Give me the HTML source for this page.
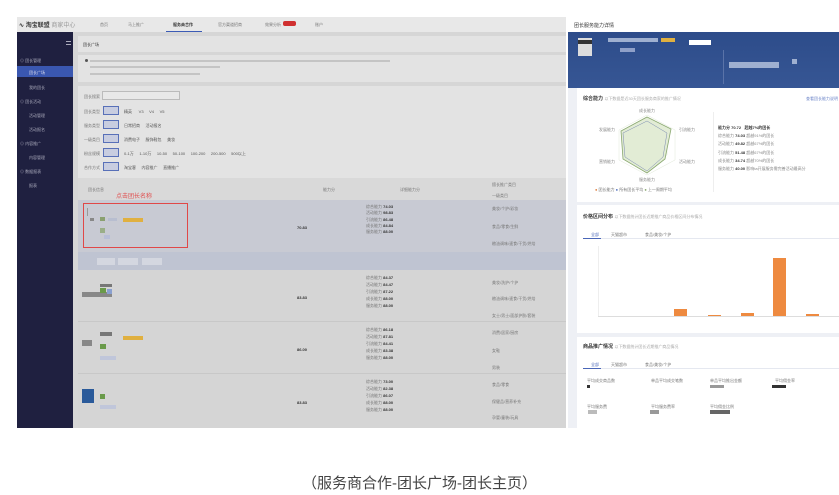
<!DOCTYPE html>
<html><head><meta charset="utf-8"><style>
*{margin:0;padding:0;box-sizing:border-box}
body{width:839px;height:495px;background:#fff;position:relative;overflow:hidden;font-family:"Liberation Sans","Noto Sans CJK SC",sans-serif;color:#555}
.a{position:absolute}
.t{font-size:4px;color:#777;white-space:nowrap}
.b{font-size:4px;color:#333;font-weight:bold;white-space:nowrap}
.wrap{position:absolute;left:0;top:0;width:839px;height:495px;filter:blur(0.3px)}
</style></head><body><div class="wrap">
<!-- left screenshot -->
<div class="a" style="left:17px;top:17px;width:549px;height:15px;background:#e8e8e8"></div>
<div class="a" style="left:19px;top:20px;font-size:6px;color:#333;font-weight:bold">∿ 淘宝联盟 <span style="color:#999;font-weight:normal">商家中心</span></div>
<div class="a t" style="left:100px;top:22px">首页</div>
<div class="a t" style="left:128px;top:22px">马上推广</div>
<div class="a b" style="left:173px;top:22px">服务商合作</div>
<div class="a" style="left:166px;top:31px;width:36px;height:1px;background:#3b5bb5"></div>
<div class="a t" style="left:218px;top:22px">官方渠道招商</div>
<div class="a t" style="left:265px;top:22px">效果分析</div>
<div class="a" style="left:283px;top:21px;width:13px;height:5px;background:#d03030;border-radius:2px"></div>
<div class="a t" style="left:315px;top:22px">账户</div>
<div class="a" style="left:17px;top:32px;width:56px;height:396px;background:#1f2040"></div>
<div class="a" style="left:66px;top:41px;width:5px;height:4px;border-top:1px solid #aab;border-bottom:1px solid #aab"></div>
<div class="a" style="left:17px;top:66px;width:56px;height:11px;background:#3a57b0"></div>
<div class="a t" style="left:20px;top:58px;color:#aab">⊙ 团长管理</div>
<div class="a t" style="left:29px;top:70px;color:#dde">团长广场</div>
<div class="a t" style="left:29px;top:85px;color:#aab">我的团长</div>
<div class="a t" style="left:20px;top:99px;color:#aab">⊙ 团长活动</div>
<div class="a t" style="left:29px;top:113px;color:#aab">活动管理</div>
<div class="a t" style="left:29px;top:127px;color:#aab">活动报名</div>
<div class="a t" style="left:20px;top:141px;color:#aab">⊙ 内容推广</div>
<div class="a t" style="left:29px;top:155px;color:#aab">内容管理</div>
<div class="a t" style="left:20px;top:169px;color:#aab">⊙ 数据报表</div>
<div class="a t" style="left:29px;top:183px;color:#aab">报表</div>
<div class="a" style="left:73px;top:32px;width:493px;height:396px;background:#d6d6d6"></div>
<div class="a" style="left:78px;top:36px;width:488px;height:16px;background:#e3e3e3"></div>
<div class="a t" style="left:83px;top:42px;color:#333">团长广场</div>
<div class="a" style="left:78px;top:55px;width:488px;height:27px;background:#e3e3e3"></div>
<div class="a" style="left:85px;top:59px;width:3px;height:3px;border-radius:50%;background:#555"></div>
<div class="a" style="left:90px;top:60px;width:300px;height:2px;background:#c4c4c4"></div>
<div class="a" style="left:90px;top:66px;width:130px;height:2px;background:#c4c4c4"></div>
<div class="a" style="left:90px;top:73px;width:110px;height:2px;background:#c4c4c4"></div>
<div class="a" style="left:78px;top:86px;width:488px;height:92px;background:#e3e3e3"></div>
<div class="a t" style="left:84px;top:94px">团长搜索</div>
<div class="a" style="left:102px;top:91px;width:78px;height:9px;border:1px solid #bbb;background:#e8e8e8"></div>
<div class="a t" style="left:84px;top:109px">团长类型</div>
<div class="a t" style="left:84px;top:123px">服务类型</div>
<div class="a t" style="left:84px;top:137px">一级类目</div>
<div class="a t" style="left:84px;top:151px">粉丝规模</div>
<div class="a t" style="left:84px;top:165px">合作方式</div>
<div class="a" style="left:103px;top:106px;width:16px;height:9px;border:1px solid #5870b8;background:#c8cde0"></div>
<div class="a" style="left:103px;top:120px;width:16px;height:9px;border:1px solid #5870b8;background:#c8cde0"></div>
<div class="a" style="left:103px;top:134px;width:16px;height:9px;border:1px solid #5870b8;background:#c8cde0"></div>
<div class="a" style="left:103px;top:148px;width:16px;height:9px;border:1px solid #5870b8;background:#c8cde0"></div>
<div class="a" style="left:103px;top:162px;width:16px;height:9px;border:1px solid #5870b8;background:#c8cde0"></div>
<div class="a t" style="left:124px;top:109px;color:#555">精英 &nbsp;&nbsp;&nbsp;&nbsp; V3 &nbsp;&nbsp;&nbsp; V4 &nbsp;&nbsp;&nbsp; V5</div>
<div class="a t" style="left:124px;top:123px;color:#555">日常招商 &nbsp;&nbsp;&nbsp; 活动报名</div>
<div class="a t" style="left:124px;top:137px;color:#555">消费电子 &nbsp;&nbsp;&nbsp; 服饰鞋包 &nbsp;&nbsp;&nbsp; 美妆</div>
<div class="a t" style="left:124px;top:151px;color:#555">0-1万 &nbsp;&nbsp;&nbsp; 1-10万 &nbsp;&nbsp;&nbsp; 10-50 &nbsp;&nbsp;&nbsp; 50-100 &nbsp;&nbsp;&nbsp; 100-200 &nbsp;&nbsp;&nbsp; 200-500 &nbsp;&nbsp;&nbsp; 500以上</div>
<div class="a t" style="left:124px;top:165px;color:#555">淘宝客 &nbsp;&nbsp;&nbsp; 内容推广 &nbsp;&nbsp;&nbsp; 直播推广</div>
<div class="a" style="left:78px;top:178px;width:488px;height:22px;background:#d9d9d9"></div>
<div class="a t" style="left:88px;top:187px">团长信息</div>
<div class="a" style="left:116px;top:191px;font-size:6px;color:#e05050">点击团长名称</div>
<div class="a t" style="left:323px;top:187px">能力分</div>
<div class="a t" style="left:400px;top:187px">详细能力分</div>
<div class="a t" style="left:492px;top:182px">擅长推广类目</div>
<div class="a t" style="left:492px;top:193px">一级类目</div>
<div class="a" style="left:78px;top:200px;width:488px;height:52px;background:#c8cad3"></div>
<div class="a" style="left:83px;top:203px;width:105px;height:45px;border:1px solid #e04848"></div>
<div class="a" style="left:87px;top:208px;width:1px;height:8px;background:#999"></div>
<div class="a" style="left:90px;top:218px;width:4px;height:3px;background:#888"></div>
<div class="a" style="left:100px;top:217px;width:5px;height:4px;background:#8aa070"></div>
<div class="a" style="left:108px;top:218px;width:9px;height:3px;background:#b8bed0"></div>
<div class="a" style="left:123px;top:218px;width:20px;height:4px;background:#e0b040"></div>
<div class="a" style="left:100px;top:228px;width:5px;height:5px;background:#9aae88"></div>
<div class="a" style="left:104px;top:235px;width:6px;height:4px;background:#b8bed8"></div>
<div class="a" style="left:78px;top:252px;width:488px;height:18px;background:#bfc4d2"></div>
<div class="a" style="left:97px;top:258px;width:18px;height:7px;background:#d4d7e0"></div>
<div class="a" style="left:118px;top:258px;width:20px;height:7px;background:#d4d7e0"></div>
<div class="a" style="left:142px;top:258px;width:20px;height:7px;background:#d4d7e0"></div>
<div class="a" style="left:78px;top:270px;width:488px;height:158px;background:#d5d5d5"></div>
<div class="a" style="left:78px;top:321px;width:488px;height:1px;background:#c8c8c8"></div>
<div class="a" style="left:78px;top:373px;width:488px;height:1px;background:#c8c8c8"></div>
<div class="a" style="left:82px;top:292px;width:30px;height:5px;background:#888"></div>
<div class="a" style="left:100px;top:284px;width:12px;height:3px;background:#777"></div>
<div class="a" style="left:100px;top:288px;width:6px;height:5px;background:#6a9a4a"></div>
<div class="a" style="left:107px;top:289px;width:5px;height:5px;background:#8aa0d0"></div>
<div class="a" style="left:82px;top:340px;width:10px;height:6px;background:#888"></div>
<div class="a" style="left:100px;top:332px;width:12px;height:4px;background:#777"></div>
<div class="a" style="left:100px;top:344px;width:6px;height:5px;background:#6a9a4a"></div>
<div class="a" style="left:100px;top:356px;width:16px;height:4px;background:#c0c6da"></div>
<div class="a" style="left:123px;top:336px;width:20px;height:4px;background:#e0b040"></div>
<div class="a" style="left:82px;top:389px;width:12px;height:14px;background:#2a5a9a"></div>
<div class="a" style="left:100px;top:394px;width:5px;height:5px;background:#6a9a4a"></div>
<div class="a" style="left:100px;top:405px;width:16px;height:4px;background:#c0c6da"></div>
<div class="a b" style="left:297px;top:225px">70.83</div>
<div class="a b" style="left:297px;top:295px">83.83</div>
<div class="a b" style="left:297px;top:347px">86.00</div>
<div class="a b" style="left:297px;top:400px">83.83</div>
<div class="a" style="left:366px;top:204px;font-size:4px;line-height:6.3px;color:#777">
<div>综合能力 <b style="color:#333">74.03</b></div><div>活动能力 <b style="color:#333">98.83</b></div><div>引流能力 <b style="color:#333">86.48</b></div><div>成长能力 <b style="color:#333">84.84</b></div><div>服务能力 <b style="color:#333">88.00</b></div></div>
<div class="a" style="left:366px;top:274px;font-size:4px;line-height:7px;color:#777">
<div>综合能力 <b style="color:#333">84.37</b></div><div>活动能力 <b style="color:#333">84.47</b></div><div>引流能力 <b style="color:#333">87.22</b></div><div>成长能力 <b style="color:#333">88.00</b></div><div>服务能力 <b style="color:#333">88.00</b></div></div>
<div class="a" style="left:366px;top:326px;font-size:4px;line-height:7px;color:#777">
<div>综合能力 <b style="color:#333">86.18</b></div><div>活动能力 <b style="color:#333">87.81</b></div><div>引流能力 <b style="color:#333">84.41</b></div><div>成长能力 <b style="color:#333">83.38</b></div><div>服务能力 <b style="color:#333">88.00</b></div></div>
<div class="a" style="left:366px;top:378px;font-size:4px;line-height:7px;color:#777">
<div>综合能力 <b style="color:#333">73.00</b></div><div>活动能力 <b style="color:#333">82.38</b></div><div>引流能力 <b style="color:#333">86.07</b></div><div>成长能力 <b style="color:#333">88.00</b></div><div>服务能力 <b style="color:#333">88.00</b></div></div>
<div class="a t" style="left:492px;top:206px">美妆/个护/彩妆</div>
<div class="a t" style="left:492px;top:224px">食品/零食/生鲜</div>
<div class="a t" style="left:492px;top:241px">粮油调味/速食/干货/烘焙</div>
<div class="a t" style="left:492px;top:280px">美妆/洗护/个护</div>
<div class="a t" style="left:492px;top:296px">粮油调味/速食/干货/烘焙</div>
<div class="a t" style="left:492px;top:313px">女士/男士/面部护肤/套装</div>
<div class="a t" style="left:492px;top:330px">消费/居家/厨房</div>
<div class="a t" style="left:492px;top:348px">女鞋</div>
<div class="a t" style="left:492px;top:365px">男装</div>
<div class="a t" style="left:492px;top:382px">食品/零食</div>
<div class="a t" style="left:492px;top:399px">保健品/营养补充</div>
<div class="a t" style="left:492px;top:415px">孕婴/童装/玩具</div>

<!-- right screenshot -->
<div class="a" style="left:568px;top:17px;width:271px;height:15px;background:#fff"></div>
<div class="a" style="left:574px;top:22px;font-size:5px;color:#333">团长服务能力详情</div>
<div class="a" style="left:568px;top:32px;width:271px;height:76px;background:linear-gradient(#2d4c8a,#3a5a98)"></div>
<div class="a" style="left:568px;top:88px;width:271px;height:340px;background:#eef0f5"></div>
<div class="a" style="left:578px;top:38px;width:14px;height:18px;background:#ddd"></div>
<div class="a" style="left:578px;top:40px;width:14px;height:4px;background:#333"></div>
<div class="a" style="left:608px;top:38px;width:50px;height:4px;background:#9fb0d0"></div>
<div class="a" style="left:620px;top:48px;width:15px;height:4px;background:#8fa0c8"></div>
<div class="a" style="left:661px;top:38px;width:14px;height:4px;background:#e0b040"></div>
<div class="a" style="left:689px;top:40px;width:22px;height:5px;background:#fff"></div>
<div class="a" style="left:729px;top:62px;width:50px;height:6px;background:#9fb0d0"></div>
<div class="a" style="left:792px;top:59px;width:5px;height:5px;background:#9fb0d0"></div>
<div class="a" style="left:723px;top:50px;width:1px;height:34px;background:#5a73a8"></div>
<div class="a" style="left:577px;top:88px;width:262px;height:114px;background:#fff"></div>
<div class="a" style="left:583px;top:95px;font-size:5px;color:#333;font-weight:bold">综合能力 <span class="t" style="font-weight:normal;color:#aaa">以下数据是近30天团长服务商家的推广情况</span></div>
<div class="a t" style="left:806px;top:96px;color:#6b84c8">查看团长能力说明</div>
<svg class="a" style="left:595px;top:107px" width="110" height="90">
<polygon points="52,8 80,23 80,53 52,68 24,53 24,23" fill="none" stroke="#e0e8d8" stroke-width=".5"/>
<polygon points="52,18 72,28 72,48 52,58 32,48 32,28" fill="none" stroke="#e0e8d8" stroke-width=".5"/>
<polygon points="52,10 76,22 70,52 52,66 28,52 26,24" fill="#e2ecd5" stroke="#8aa870" stroke-width=".8"/>
<polygon points="52,14 72,26 68,50 52,64 30,50 28,26" fill="none" stroke="#7a8ab0" stroke-width=".5"/>
<text x="44" y="5" font-size="4" fill="#888">成长能力</text>
<text x="84" y="24" font-size="4" fill="#888">引流能力</text>
<text x="84" y="56" font-size="4" fill="#888">活动能力</text>
<text x="44" y="74" font-size="4" fill="#888">服务能力</text>
<text x="4" y="56" font-size="4" fill="#888">营销能力</text>
<text x="4" y="24" font-size="4" fill="#888">发展能力</text>
<text x="0" y="84" font-size="4" fill="#777"><tspan fill="#e08040">●</tspan> 团长能力 <tspan fill="#5070c0">●</tspan> 所有团长平均 <tspan fill="#8aa870">●</tspan> 上一周期平均</text>
</svg>
<div class="a" style="left:713px;top:112px;width:1px;height:80px;background:#eee"></div>
<div class="a" style="left:718px;top:124px;font-size:4px;line-height:8.2px;color:#888">
<div><b style="color:#333">能力分 70.72</b> &nbsp; <b style="color:#333">超越7%的团长</b></div>
<div>综合能力 <b style="color:#333">74.03</b> 超越91%的团长</div>
<div>活动能力 <b style="color:#333">49.82</b> 超越67%的团长</div>
<div>引流能力 <b style="color:#333">51.48</b> 超越67%的团长</div>
<div>成长能力 <b style="color:#333">34.74</b> 超越70%的团长</div>
<div>服务能力 <b style="color:#333">40.00</b> 影响ta开展服务需完善活动最高分</div></div>
<div class="a" style="left:577px;top:205px;width:262px;height:128px;background:#fff"></div>
<div class="a" style="left:583px;top:213px;font-size:5px;color:#333;font-weight:bold">价格区间分布 <span class="t" style="font-weight:normal;color:#aaa">以下数据统计团长近期推广商品价格区间分布情况</span></div>
<div class="a t" style="left:591px;top:232px;color:#4a66b8">全部</div>
<div class="a t" style="left:611px;top:232px">天猫超市</div>
<div class="a t" style="left:645px;top:232px">食品/美妆/个护</div>
<div class="a" style="left:583px;top:238px;width:256px;height:1px;background:#e5e8f0"></div>
<div class="a" style="left:583px;top:238px;width:18px;height:1px;background:#4a66b8"></div>
<div class="a" style="left:598px;top:246px;width:1px;height:71px;background:#eee"></div>
<div class="a" style="left:598px;top:316px;width:241px;height:1px;background:#ddd"></div>
<div class="a" style="left:674px;top:309px;width:13px;height:7px;background:#ee8a40"></div>
<div class="a" style="left:708px;top:315px;width:13px;height:1px;background:#ee8a40"></div>
<div class="a" style="left:741px;top:313px;width:13px;height:3px;background:#ee8a40"></div>
<div class="a" style="left:773px;top:258px;width:13px;height:58px;background:#ee8a40"></div>
<div class="a" style="left:806px;top:314px;width:13px;height:2px;background:#ee8a40"></div>
<div class="a" style="left:577px;top:337px;width:262px;height:91px;background:#fff"></div>
<div class="a" style="left:583px;top:343px;font-size:5px;color:#333;font-weight:bold">商品推广情况 <span class="t" style="font-weight:normal;color:#aaa">以下数据统计团长近期推广商品情况</span></div>
<div class="a t" style="left:591px;top:362px;color:#4a66b8">全部</div>
<div class="a t" style="left:611px;top:362px">天猫超市</div>
<div class="a t" style="left:645px;top:362px">食品/美妆/个护</div>
<div class="a" style="left:583px;top:368px;width:256px;height:1px;background:#e5e8f0"></div>
<div class="a" style="left:583px;top:368px;width:18px;height:1px;background:#4a66b8"></div>
<div class="a t" style="left:587px;top:378px">平均成交商品数</div>
<div class="a t" style="left:651px;top:378px">单品平均成交笔数</div>
<div class="a t" style="left:710px;top:378px">单品平均推出金额</div>
<div class="a t" style="left:775px;top:378px">平均佣金率</div>
<div class="a" style="left:587px;top:385px;width:3px;height:3px;background:#333"></div>
<div class="a" style="left:710px;top:385px;width:14px;height:3px;background:#999"></div>
<div class="a" style="left:772px;top:385px;width:14px;height:3px;background:#333"></div>
<div class="a t" style="left:587px;top:404px">平均服务费</div>
<div class="a t" style="left:651px;top:404px">平均服务费率</div>
<div class="a t" style="left:710px;top:404px">平均佣金比例</div>
<div class="a" style="left:588px;top:410px;width:9px;height:4px;background:#bbb"></div>
<div class="a" style="left:650px;top:410px;width:9px;height:4px;background:#999"></div>
<div class="a" style="left:710px;top:410px;width:20px;height:4px;background:#666"></div>

<div class="a" style="left:0;top:472px;width:839px;text-align:center;font-size:15px;color:#444">（服务商合作-团长广场-团长主页）</div>
</div></body></html>
